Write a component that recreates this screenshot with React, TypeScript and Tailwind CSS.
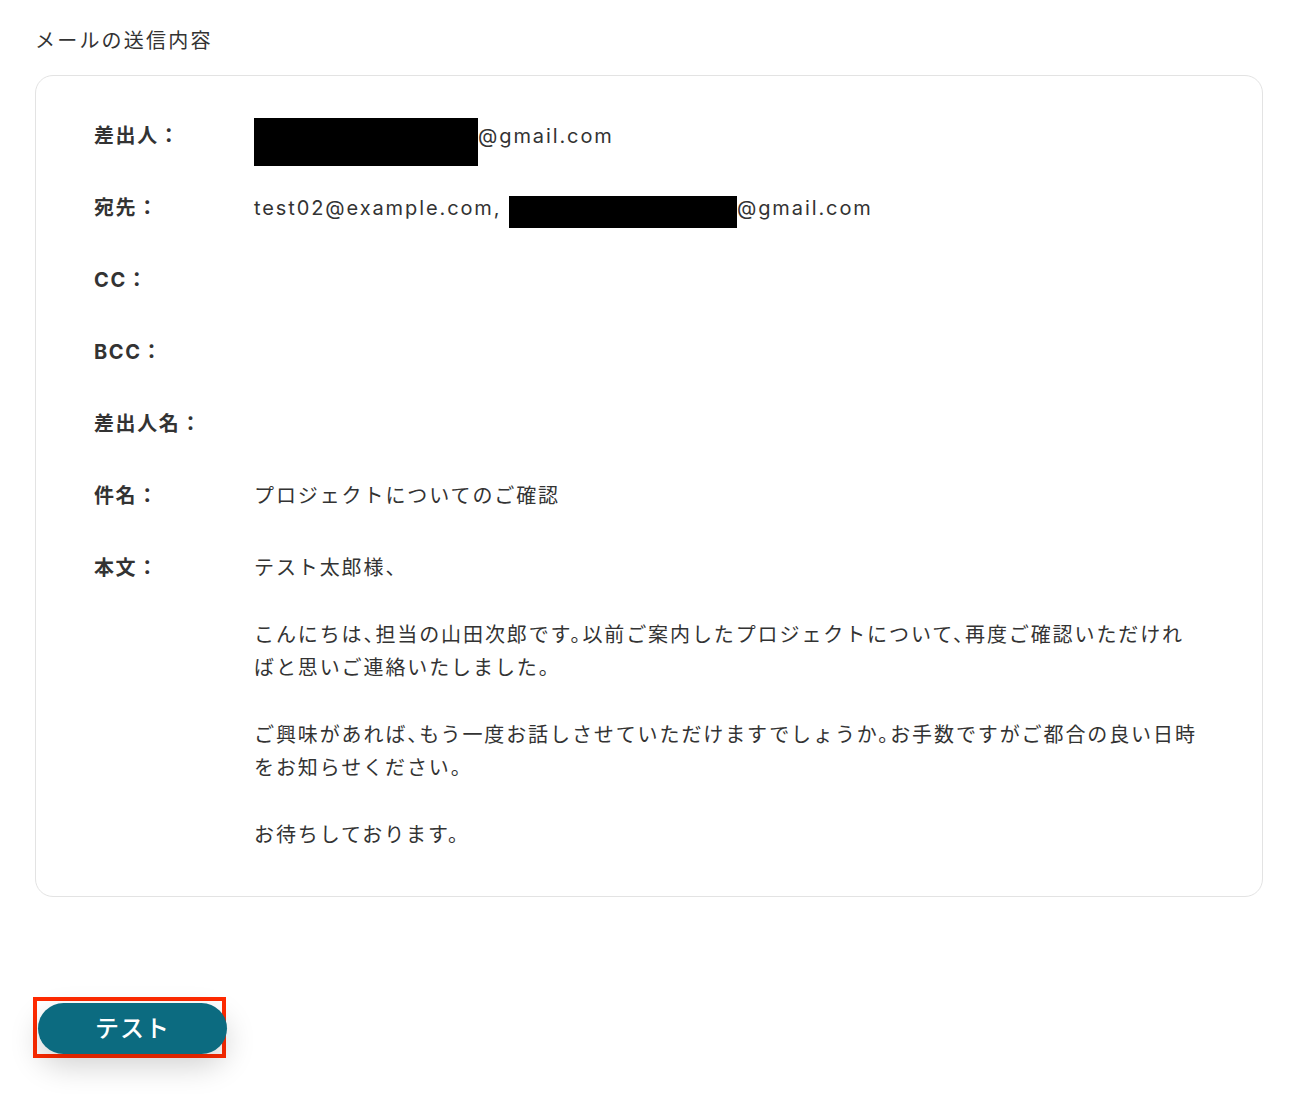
const font = "font-['Inter','Noto_Sans_CJK_JP',sans-serif]";

function Redacted({ className }: { className: string }) {
    return <span className={`inline-block bg-black align-top ${className}`} />;
}

function Row({ label, children }: { label: string; children?: React.ReactNode }) {
    return (
        <div className="flex">
            <div className="w-[160px] shrink-0 text-[20px] font-bold leading-[33px] tracking-[1.6px] text-[#333]">
                {label}
            </div>
            {/* punctuation is half-width in the reference */}
            <div className="min-w-0 flex-1 text-[20px] leading-[33px] tracking-[1.9px] text-[#333] [font-feature-settings:'halt']">
                {children}
            </div>
        </div>
    );
}

export default function App() {
    return (
        <div className={`min-h-[1094px] bg-white pl-[35px] pr-[33px] pt-[26px] ${font}`}>
            <h2 className="text-[20px] leading-[30px] tracking-[2.2px] text-[#333]">
                メールの送信内容
            </h2>

            {/* Card */}
            <div className="mt-[19px] rounded-[18px] border border-[#e3e3e3] bg-white pb-[44px] pl-[58px] pr-[58px] pt-[44px]">
                <div className="flex flex-col gap-[39px]">
                    <Row label="差出人：">
                        <Redacted className="-mb-[13px] -mt-[2px] h-[48px] w-[224px]" />
                        @gmail.com
                    </Row>
                    <Row label="宛先：">
                        test02@example.com,{" "}
                        <Redacted className="-mb-[3px] mt-[4px] h-[32px] w-[228px]" />
                        @gmail.com
                    </Row>
                    <Row label="CC：" />
                    <Row label="BCC：" />
                    <Row label="差出人名：" />
                    <Row label="件名：">プロジェクトについてのご確認</Row>
                    <Row label="本文：">
                        <p>テスト太郎様、</p>
                        <p className="mt-[34px]">
                            こんにちは、担当の山田次郎です。以前ご案内したプロジェクトについて、再度ご確認いただければと思いご連絡いたしました。
                        </p>
                        <p className="mt-[34px]">
                            ご興味があれば、もう一度お話しさせていただけますでしょうか。お手数ですがご都合の良い日時をお知らせください。
                        </p>
                        <p className="mt-[34px]">お待ちしております。</p>
                    </Row>
                </div>
            </div>

            {/* Test button with highlight frame */}
            <div className="-ml-[2px] mt-[100px] inline-block border-[4px] border-[#ff2a00] pl-[1px] pt-[2px]">
                <button
                    type="button"
                    className="-mr-[5px] flex h-[51px] w-[189px] items-center justify-center rounded-full bg-[#0c6b80] text-[24px] font-medium tracking-[0.04em] text-white shadow-[0_12px_30px_rgba(0,0,0,0.18)]"
                >
                    テスト
                </button>
            </div>
        </div>
    );
}
